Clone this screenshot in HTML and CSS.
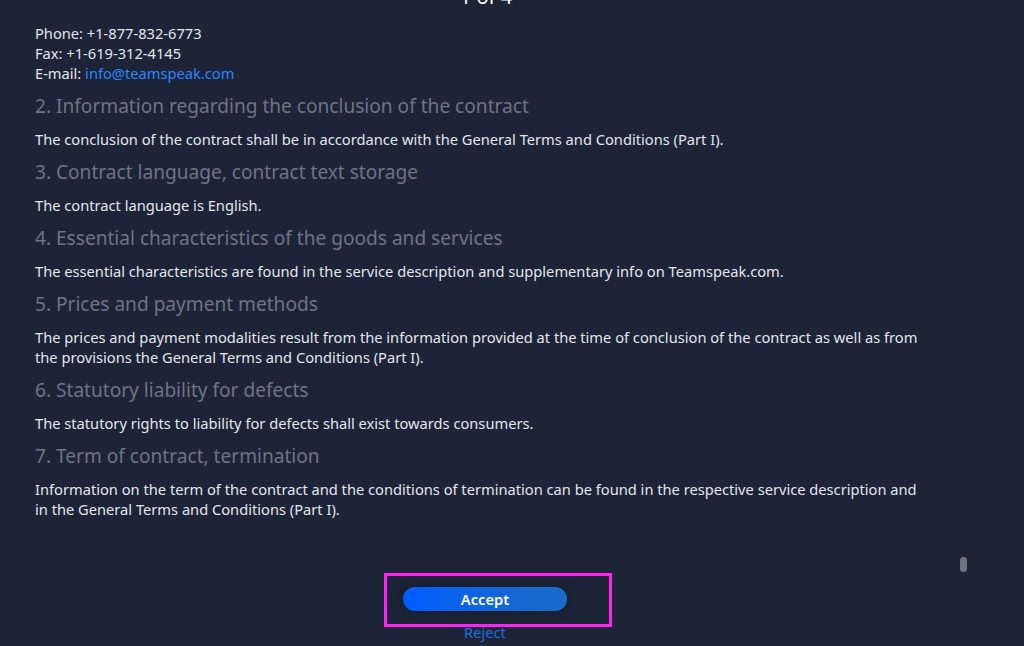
FILE: index.html
```html
<!DOCTYPE html>
<html lang="en">
<head>
<meta charset="utf-8">
<title>Terms</title>
<link rel="stylesheet" href="styles.css">
</head>
<body>
<div class="app">
  <div class="scroll">
    <div class="content">
      <div class="pager">1 of 4</div>
      <p class="text">Phone: +1-877-832-6773<br>Fax: +1-619-312-4145<br>E-mail: <a class="link" href="#">info@teamspeak.com</a></p>
      <h2 class="heading">2. Information regarding the conclusion of the contract</h2>
      <p class="text">The conclusion of the contract shall be in accordance with the General Terms and Conditions (Part I).</p>
      <h2 class="heading">3. Contract language, contract text storage</h2>
      <p class="text">The contract language is English.</p>
      <h2 class="heading">4. Essential characteristics of the goods and services</h2>
      <p class="text">The essential characteristics are found in the service description and supplementary info on Teamspeak.com.</p>
      <h2 class="heading">5. Prices and payment methods</h2>
      <p class="text">The prices and payment modalities result from the information provided at the time of conclusion of the contract as well as from the provisions the General Terms and Conditions (Part I).</p>
      <h2 class="heading">6. Statutory liability for defects</h2>
      <p class="text">The statutory rights to liability for defects shall exist towards consumers.</p>
      <h2 class="heading">7. Term of contract, termination</h2>
      <p class="text">Information on the term of the contract and the conditions of termination can be found in the respective service description and in the General Terms and Conditions (Part I).</p>
    </div>
    <div class="thumb"></div>
  </div>
  <div class="footer">
    <div class="actions">
      <button class="accept">Accept</button>
      <div class="highlight"></div>
    </div>
    <a class="reject" href="#">Reject</a>
  </div>
</div>
</body>
</html>
```

FILE: styles.css
```css
html, body {
  margin: 0;
  padding: 0;
}
body {
  background: #1d2438;
  font-family: "Noto Sans", "Open Sans", sans-serif;
  color: #e4e6ec;
  overflow: hidden;
}
.app {
  height: 646px;
  display: flex;
  flex-direction: column;
}
.scroll {
  position: relative;
  height: 575px;
  width: 972px;
  overflow: hidden;
  flex: none;
}
.content {
  margin-top: -17px;
  padding-left: 35px;
  width: 895px;
}
.pager {
  text-align: center;
  font-size: 20px;
  line-height: 28px;
  color: #ffffff;
  width: 902px;
  margin-bottom: 12px;
}
.text {
  margin: 0;
  font-size: 14.66px;
  line-height: 20px;
  color: #e4e6ec;
}
.link {
  color: #2a86ff;
  text-decoration: none;
}
.heading {
  margin: 10px 0;
  font-size: 19.1px;
  line-height: 26px;
  font-weight: 400;
  color: #6e7484;
}
.thumb {
  position: absolute;
  right: 5px;
  bottom: 3px;
  width: 7px;
  height: 15px;
  border-radius: 4px;
  background: #6f7480;
}
.footer {
  width: 970px;
  display: flex;
  flex-direction: column;
  align-items: center;
}
.actions {
  position: relative;
  margin-top: 12px;
}
.accept {
  display: block;
  width: 164px;
  height: 24px;
  border: none;
  border-radius: 12px;
  background: linear-gradient(90deg, #005dff 0%, #1466d8 60%, #1a6bc8 100%);
  color: #ffffff;
  font-family: "Noto Sans", "Open Sans", sans-serif;
  font-size: 14.66px;
  font-weight: 600;
  box-shadow: 0 0 8px 4px rgba(10, 14, 28, 0.25);
  padding: 0;
}
.highlight {
  position: absolute;
  left: -19px;
  top: -14px;
  width: 222px;
  height: 48px;
  border: 3px solid #ff22f0;
  pointer-events: none;
}
.reject {
  margin-top: 11px;
  font-size: 14.66px;
  line-height: 20px;
  color: #1f6fdc;
  text-decoration: none;
}
```
